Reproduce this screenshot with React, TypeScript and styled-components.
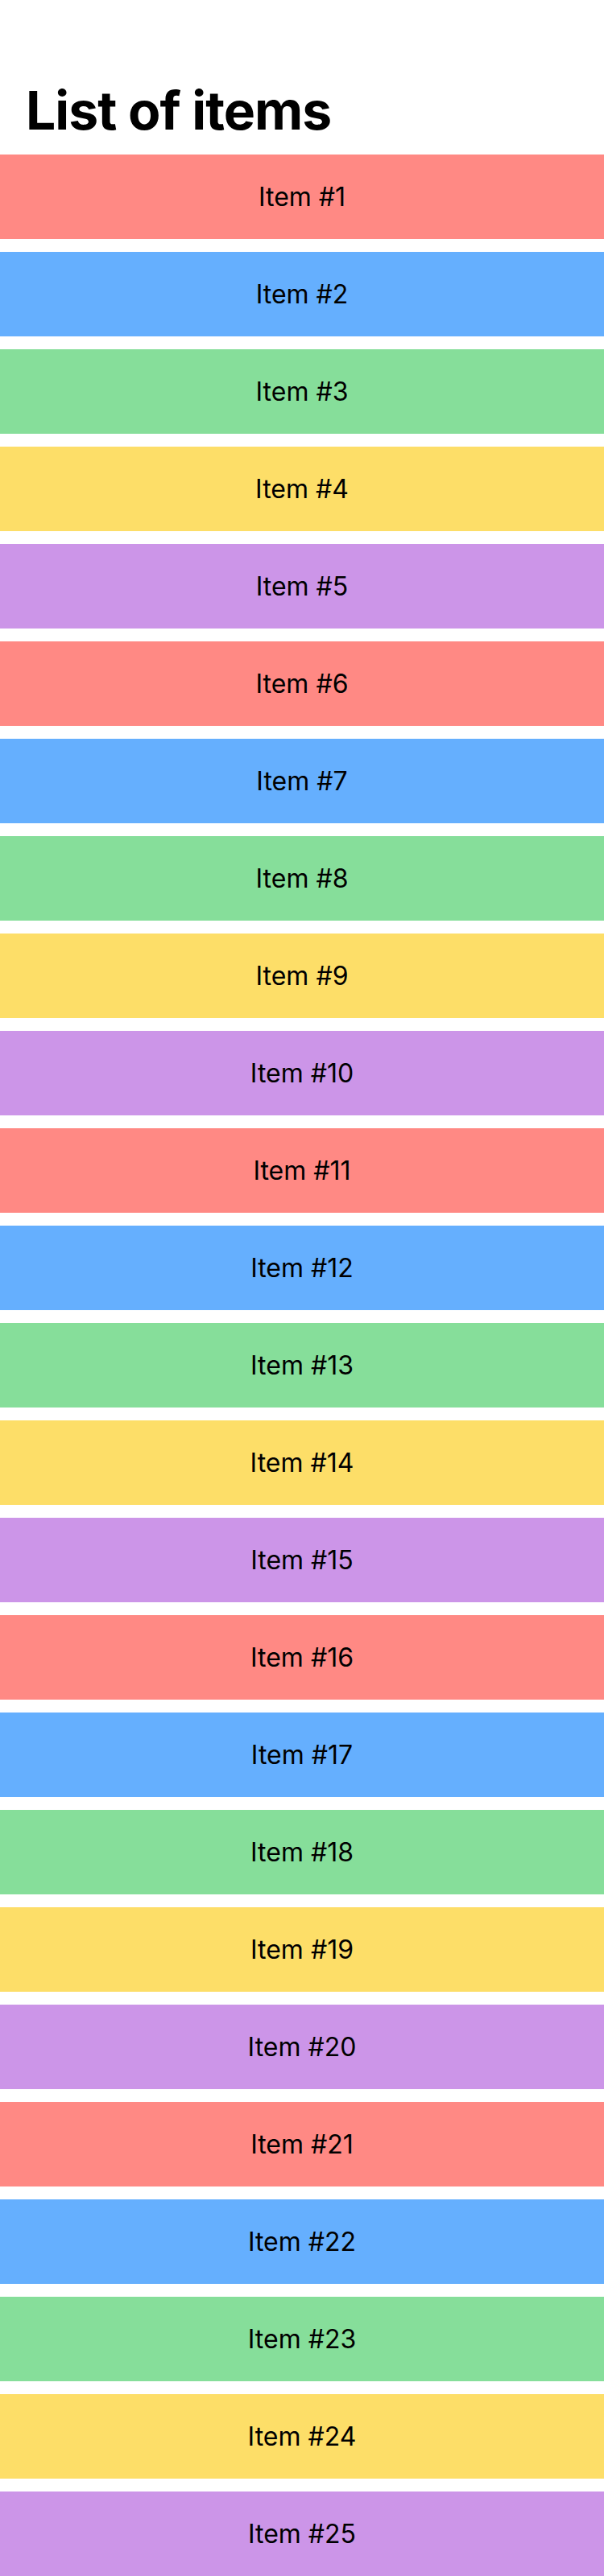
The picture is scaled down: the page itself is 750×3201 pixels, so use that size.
import React from "react";
import styled, { createGlobalStyle } from "styled-components";

const Global = createGlobalStyle`
  html, body { margin: 0; padding: 0; background: #ffffff; }
  body { font-family: Inter, "Noto Sans", sans-serif; color: #000; }
`;

const Page = styled.main`
  display: flex;
  flex-direction: column;
`;

const Title = styled.h1`
  margin: 0;
  padding: 97px 32px 15px;
  font-size: 66px;
  font-weight: 700;
  line-height: 80px;
  letter-spacing: -1px;
`;

const List = styled.ul`
  list-style: none;
  margin: 0;
  padding: 0;
  display: flex;
  flex-direction: column;
  gap: 16px;
`;

const Item = styled.li<{ $bg: string }>`
  height: 105px;
  display: flex;
  align-items: center;
  justify-content: center;
  background: ${(p) => p.$bg};
  font-size: 32px;
  font-weight: 400;
`;

const colors = ["#FF8984", "#65AFFE", "#86DE9A", "#FDDE68", "#CC95E8"];

export default function App() {
  const items = Array.from({ length: 25 }, (_, i) => i + 1);
  return (
    <>
      <Global />
      <Page>
        <Title>List of items</Title>
        <List>
          {items.map((n) => (
            <Item key={n} $bg={colors[(n - 1) % colors.length]}>
              Item #{n}
            </Item>
          ))}
        </List>
      </Page>
    </>
  );
}
